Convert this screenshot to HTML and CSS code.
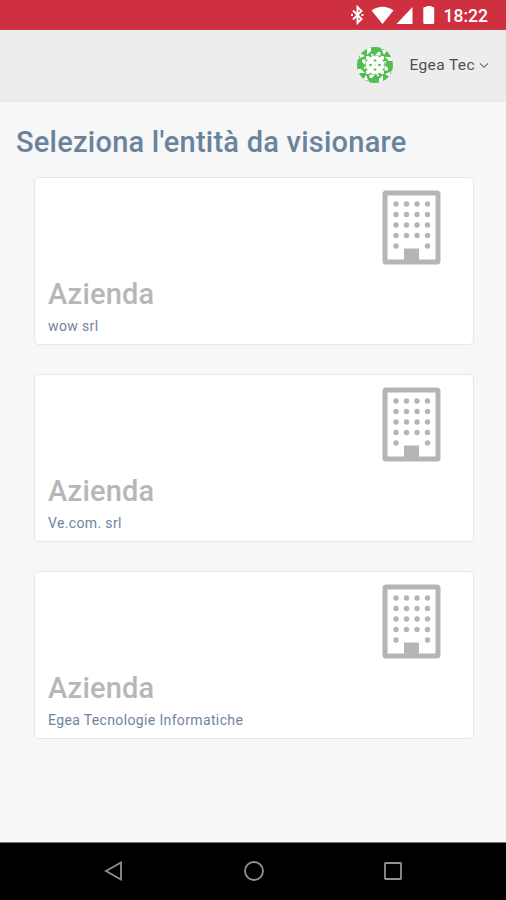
FILE: index.html
```html
<!DOCTYPE html>
<html lang="it">
<head>
<meta charset="utf-8">
<title>Egea Tec</title>
<link rel="stylesheet" href="styles.css">
</head>
<body>
<svg class="defs" width="0" height="0" aria-hidden="true">
  <symbol id="building" viewBox="0 0 59 75">
    <rect x="3" y="3" width="53" height="69" rx="1" fill="none" stroke="#b5b5b5" stroke-width="5"/>
    <path d="M22 58.5h15v13H22z" fill="#b5b5b5"/>
    <path d="M14 14h.01M24.5 14h.01M35 14h.01M45.5 14h.01M14 24.5h.01M24.5 24.5h.01M35 24.5h.01M45.5 24.5h.01M14 35h.01M24.5 35h.01M35 35h.01M45.5 35h.01M14 45.5h.01M24.5 45.5h.01M35 45.5h.01M45.5 45.5h.01M14 56h.01M45.5 56h.01" stroke="#b5b5b5" stroke-width="5.400" stroke-linecap="round"/>
  </symbol>
</svg>
<div class="status">
  <svg class="status-icons" viewBox="0 0 86 20" fill="#fff">
    <path d="M2 5.500l8.500 8.500-4 4V2l4 4L2 14.500" fill="none" stroke="#fff" stroke-width="1.900"/>
    <path d="M0 9h2v2H0zM10.500 9h2v2h-2z"/>
    <path d="M20.500 5.500Q31.500-2 42.500 5.500L31.500 19z"/>
    <path d="M61.500 2v17H45.500z"/>
    <path d="M74 2h1.500V1h5v1H82q1.200 0 1.200 1.200v14.600q0 1.200-1.200 1.200h-8.500q-1.200 0-1.200-1.200V3.200Q72.300 2 74 2z"/>
  </svg>
  <span class="time">18:22</span>
</div>
<header class="header">
  <svg class="avatar" viewBox="0 0 36 36">
    <defs>
      <clipPath id="round"><circle cx="18" cy="18" r="18"/></clipPath>
      <g id="quarter">
        <path d="M9.500 9.500h2.500l1.500 1.500 1.500-1.500h2.500V12L16 13.500l1.500 1.500v2.500H15L13.500 16 12 17.500H9.500V15l1.500-1.500L9.500 12z" stroke="#fff" stroke-width="1"/>
        <path d="M10 0h4v4l-4 4zM14 8.500h4l-4-2zM3 6l5 3-5 2zM5 12.500h3.500V18L5 15zM23 0h5l-3 3z"/>
      </g>
    </defs>
    <g clip-path="url(#round)">
      <rect width="36" height="36" fill="#52bd50"/>
      <g fill="#fff">
        <use href="#quarter"/>
        <use href="#quarter" transform="rotate(90 18 18)"/>
        <use href="#quarter" transform="rotate(180 18 18)"/>
        <use href="#quarter" transform="rotate(270 18 18)"/>
      </g>
    </g>
  </svg>
  <span class="user">Egea Tec</span>
  <svg class="chevron" viewBox="0 0 10 7"><path d="M1 1.300l4 4 4-4" fill="none" stroke="#666" stroke-width="1.100"/></svg>
</header>
<main class="content">
  <h1 class="title">Seleziona l'entità da visionare</h1>
  <div class="cards">
    <section class="card">
      <svg class="building"><use href="#building"/></svg>
      <h2 class="kind">Azienda</h2>
      <p class="name">wow srl</p>
    </section>
    <section class="card">
      <svg class="building"><use href="#building"/></svg>
      <h2 class="kind">Azienda</h2>
      <p class="name">Ve.com. srl</p>
    </section>
    <section class="card">
      <svg class="building"><use href="#building"/></svg>
      <h2 class="kind">Azienda</h2>
      <p class="name">Egea Tecnologie Informatiche</p>
    </section>
  </div>
</main>
<nav class="navbar">
  <svg viewBox="0 0 20 20"><path d="M2 10L17 1.500v17z"/></svg>
  <svg viewBox="0 0 20 20"><circle cx="10" cy="10" r="9"/></svg>
  <svg viewBox="0 0 20 20"><rect x="2" y="2" width="16" height="16" rx=".5"/></svg>
</nav>
</body>
</html>
```
FILE: styles.css
```css
* { box-sizing: border-box; }
body {
  margin: 0;
  height: 900px;
  display: flex;
  flex-direction: column;
  background: #f7f7f7;
  font-family: Roboto, "Liberation Sans", sans-serif;
  overflow: hidden;
}
h1, h2, p { margin: 0; }
.defs { position: absolute; }
.status {
  height: 30px;
  flex: none;
  background: #ce303f;
  display: flex;
  align-items: center;
  justify-content: flex-end;
  padding-right: 18px;
  gap: 7px;
}
.status-icons { width: 86px; height: 20px; }
.time {
  color: #fff;
  font-size: 17.5px;
  font-weight: 500;
  line-height: 30px;
  padding-top: 2px;
}
.header {
  height: 70px;
  flex: none;
  background: #ededed;
  box-shadow: 0 1px 2px #ddd;
  display: flex;
  align-items: center;
  justify-content: flex-end;
  padding-right: 17px;
}
.avatar { width: 36px; height: 36px; margin-right: 16px; }
.user { font-size: 15.5px; color: #505050; letter-spacing: .4px; }
.chevron { width: 10px; height: 7px; margin-left: 4px; }
.content { flex: 1; padding: 24px 32px 0 34px; }
.title {
  margin-left: -18px;
  color: #6a839c;
  font-size: 29px;
  font-weight: 500;
  line-height: 36px;
  letter-spacing: .24px;
  white-space: nowrap;
}
.cards { display: grid; gap: 29px; margin-top: 17px; }
.card {
  height: 168px;
  background: #fff;
  border: 1px solid #e7e7e7;
  border-radius: 5px;
  padding: 12px 32px 0 13px;
  display: flex;
  flex-direction: column;
}
.building { width: 59px; height: 75px; flex: none; align-self: flex-end; }
.kind {
  margin-top: 11px;
  color: #b7b7b7;
  font-size: 29px;
  font-weight: 500;
  line-height: 36px;
  letter-spacing: .2px;
}
.name {
  color: #71839e;
  font-size: 14px;
  line-height: 18px;
  margin-top: 5px;
  letter-spacing: .36px;
}
.navbar {
  height: 58px;
  flex: none;
  background: #000;
  border-top: 1px solid #777;
  display: flex;
  justify-content: space-between;
  align-items: center;
  padding: 0 103px 2px 104px;
}
.navbar svg { width: 20px; height: 20px; fill: none; stroke: #919191; stroke-width: 1.8; }
```
